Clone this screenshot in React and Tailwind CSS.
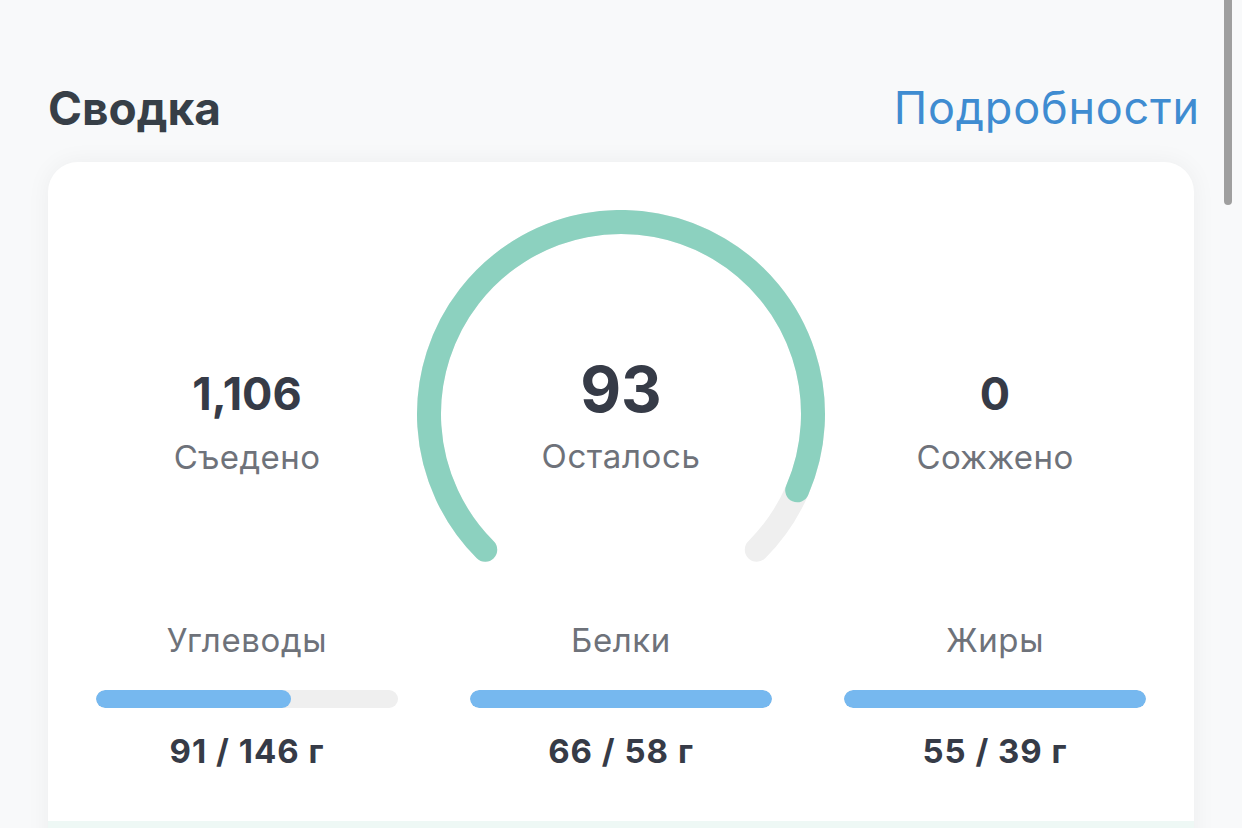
import React from "react";

function Gauge() {
  return (
    <svg width="410" height="352" viewBox="0 0 410 352" className="block shrink-0">
      <path
        d="M 69.24 339.76 A 192 192 0 1 1 340.76 339.76"
        fill="none"
        stroke="#efefef"
        strokeWidth="24"
        strokeLinecap="round"
      />
      <path
        d="M 69.24 339.76 A 192 192 0 1 1 381.2 280.25"
        fill="none"
        stroke="#8cd1bf"
        strokeWidth="24"
        strokeLinecap="round"
      />
    </svg>
  );
}

function Side({ value, label }) {
  return (
    <div className="flex flex-col items-center pt-[161px]">
      <div className="text-[45px] leading-none font-bold text-[#363b47]">{value}</div>
      <div className="mt-[25px] text-[33px] leading-none tracking-[0.4px] text-[#6e727a]">{label}</div>
    </div>
  );
}

function Macro({ label, value, fill }) {
  return (
    <div className="flex flex-col items-center">
      <div className="text-[33px] leading-none tracking-[0.6px] text-[#6e727a]">{label}</div>
      <div className="mt-[33px] h-[18px] w-[302px] rounded-full bg-[#efefef] overflow-hidden">
        <div className="h-full rounded-full bg-[#76b8ef]" style={{ width: fill }} />
      </div>
      <div className="mt-[27px] text-[33px] leading-none font-bold tracking-[1px] text-[#363b47]">{value}</div>
    </div>
  );
}

export default function App() {
  return (
    <div className="relative h-[828px] w-[1242px] overflow-hidden bg-[#f8f9fa] font-['Inter','Noto_Sans',sans-serif]">
      <div className="flex h-[162px] items-start justify-between pl-[48px] pr-[42px] pt-[85px]">
        <div className="text-[46px] leading-none font-bold text-[#373f47]">Сводка</div>
        <div className="text-[45px] leading-none tracking-[0.8px] text-[#3f8cd1]">Подробности</div>
      </div>
      <div className="mx-[48px] rounded-t-[30px] bg-white shadow-[0_0_24px_rgba(0,0,0,0.05)] overflow-hidden">
        <div className="grid grid-cols-3 px-3 pt-[48px]">
          <Side value="1,106" label="Съедено" />
          <div className="flex justify-center">
            <div className="relative w-[410px] h-[352px] shrink-0">
              <Gauge />
              <div className="absolute inset-x-0 top-[148px] flex flex-col items-center">
                <div className="text-[63px] leading-none font-bold text-[#363b47]">93</div>
                <div className="mt-[19px] text-[33px] leading-none tracking-[0.6px] text-[#6e727a]">Осталось</div>
              </div>
            </div>
          </div>
          <Side value="0" label="Сожжено" />
        </div>
        <div className="mt-[62px] grid grid-cols-3 px-3 pb-[53px]">
          <Macro label="Углеводы" value="91 / 146 г" fill="64.5%" />
          <Macro label="Белки" value="66 / 58 г" fill="100%" />
          <Macro label="Жиры" value="55 / 39 г" fill="100%" />
        </div>
        <div className="h-[40px] bg-[#eef8f5]" />
      </div>
      <div className="absolute right-[10px] top-0 h-[205px] w-[8px] rounded-b-full bg-[#9f9f9f]" />
    </div>
  );
}
